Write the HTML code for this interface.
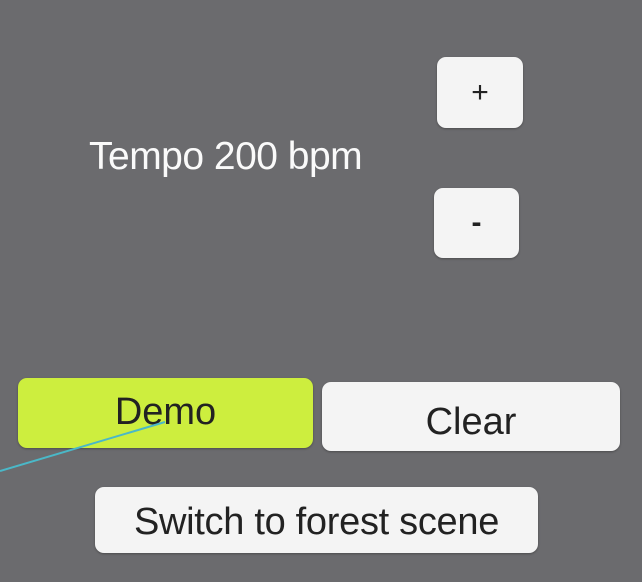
<!DOCTYPE html>
<html><head><style>
body{margin:0;width:642px;height:582px;background:#6b6b6e;position:relative;overflow:hidden;font-family:"Liberation Sans",sans-serif}
.b{position:absolute;background:#f4f4f4;border-radius:9px;color:#222;display:flex;align-items:center;justify-content:center;box-shadow:0 1px 2px rgba(0,0,0,.3);font-size:38px}
</style></head><body>
<div class="b" style="left:437px;top:57px;width:86px;height:71px;font-size:30px">+</div>
<div class="b" style="left:434px;top:188px;width:85px;height:70px;font-size:30px;font-weight:bold">-</div>
<div style="position:absolute;left:89px;top:135px;font-size:39px;color:#fafafa;letter-spacing:-0.5px">Tempo 200 bpm</div>
<div class="b" style="left:18px;top:378px;width:295px;height:70px;background:#cdee3e;padding-bottom:2px;box-sizing:border-box">Demo</div>
<div class="b" style="left:322px;top:382px;width:298px;height:69px;padding-top:12px;box-sizing:border-box">Clear</div>
<div class="b" style="left:95px;top:487px;width:443px;height:66px;padding-top:4px;box-sizing:border-box;letter-spacing:-0.3px">Switch to forest scene</div>
<svg style="position:absolute;left:0;top:0" width="642" height="582"><line x1="0" y1="471" x2="165" y2="422" stroke="#4ab8c8" stroke-width="2"/></svg>
</body></html>
